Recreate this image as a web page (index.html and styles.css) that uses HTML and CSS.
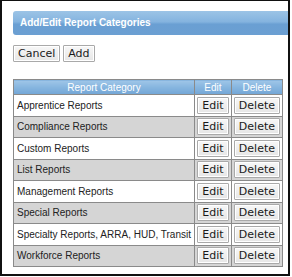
FILE: index.html
```html
<!DOCTYPE html>
<html lang="en">
<head>
  <meta charset="UTF-8">
  <title>Add/Edit Report Categories</title>
  <link rel="stylesheet" href="styles.css">
</head>
<body>
  <div class="frame">
    <div class="title-bar">Add/Edit Report Categories</div>

    <div class="actions">
      <button class="btn">Cancel</button>
      <button class="btn">Add</button>
    </div>

    <table class="grid">
      <thead>
        <tr>
          <th class="col-name">Report Category</th>
          <th class="col-edit">Edit</th>
          <th class="col-delete">Delete</th>
        </tr>
      </thead>
      <tbody>
        <tr>
          <td>Apprentice Reports</td>
          <td class="cell-btn"><button class="btn">Edit</button></td>
          <td class="cell-btn"><button class="btn">Delete</button></td>
        </tr>
        <tr class="alt">
          <td>Compliance Reports</td>
          <td class="cell-btn"><button class="btn">Edit</button></td>
          <td class="cell-btn"><button class="btn">Delete</button></td>
        </tr>
        <tr>
          <td>Custom Reports</td>
          <td class="cell-btn"><button class="btn">Edit</button></td>
          <td class="cell-btn"><button class="btn">Delete</button></td>
        </tr>
        <tr class="alt">
          <td>List Reports</td>
          <td class="cell-btn"><button class="btn">Edit</button></td>
          <td class="cell-btn"><button class="btn">Delete</button></td>
        </tr>
        <tr>
          <td>Management Reports</td>
          <td class="cell-btn"><button class="btn">Edit</button></td>
          <td class="cell-btn"><button class="btn">Delete</button></td>
        </tr>
        <tr class="alt">
          <td>Special Reports</td>
          <td class="cell-btn"><button class="btn">Edit</button></td>
          <td class="cell-btn"><button class="btn">Delete</button></td>
        </tr>
        <tr>
          <td>Specialty Reports, ARRA, HUD, Transit</td>
          <td class="cell-btn"><button class="btn">Edit</button></td>
          <td class="cell-btn"><button class="btn">Delete</button></td>
        </tr>
        <tr class="alt">
          <td>Workforce Reports</td>
          <td class="cell-btn"><button class="btn">Edit</button></td>
          <td class="cell-btn"><button class="btn">Delete</button></td>
        </tr>
      </tbody>
    </table>
  </div>
</body>
</html>
```

FILE: styles.css
```css
* {
  box-sizing: border-box;
}

body {
  margin: 0;
  background: #ffffff;
  font-family: 'Liberation Sans', Arial, sans-serif;
}

.frame {
  width: 290px;
  height: 276px;
  border-style: solid;
  border-color: #111;
  border-width: 1px 2px 2px 2px;
  background: #fff;
  padding: 10px 0 0 11px;
  overflow: hidden;
}

.title-bar {
  height: 24px;
  margin-right: -20px;
  padding-left: 7px;
  line-height: 24px;
  border-radius: 3px 0 0 3px;
  background: linear-gradient(to bottom, #9cc4e6 0%, #84b3df 45%, #6a9fd3 55%, #6b9fd2 100%);
  color: #fff;
  font-size: 10px;
  font-weight: bold;
}

.actions {
  display: flex;
  gap: 3px;
  margin-top: 10px;
}

.btn {
  height: 17px;
  padding: 0 4px;
  border: 1px solid #a9a9a9;
  border-radius: 1px;
  background: linear-gradient(to bottom, #f7f7f7, #e6e6e6);
  box-shadow: inset 0 0 0 1px #ffffff;
  color: #1a1a1a;
  font-family: 'DejaVu Sans', Verdana, sans-serif;
  font-size: 11px;
  line-height: 15px;
}

.grid {
  margin-top: 17px;
  width: 270px;
  border-collapse: collapse;
  border: 1px solid #8a8a8a;
  font-size: 10px;
  color: #222;
}

.grid th {
  height: 15px;
  padding: 0;
  border: 1px solid #8a8a8a;
  background: linear-gradient(to bottom, #9fc6e8 0%, #86b5df 50%, #72a6d6 100%);
  color: #fff;
  font-weight: normal;
  text-align: center;
}

.col-name {
  width: 181px;
}

.col-edit {
  width: 37px;
}

.grid td {
  height: 21.5px;
  padding: 0 3px;
  border: 1px solid #8a8a8a;
  white-space: nowrap;
}

.grid td.cell-btn {
  padding: 0 2px;
  text-align: center;
}

.grid tr.alt td {
  background: #d5d5d5;
}
```
